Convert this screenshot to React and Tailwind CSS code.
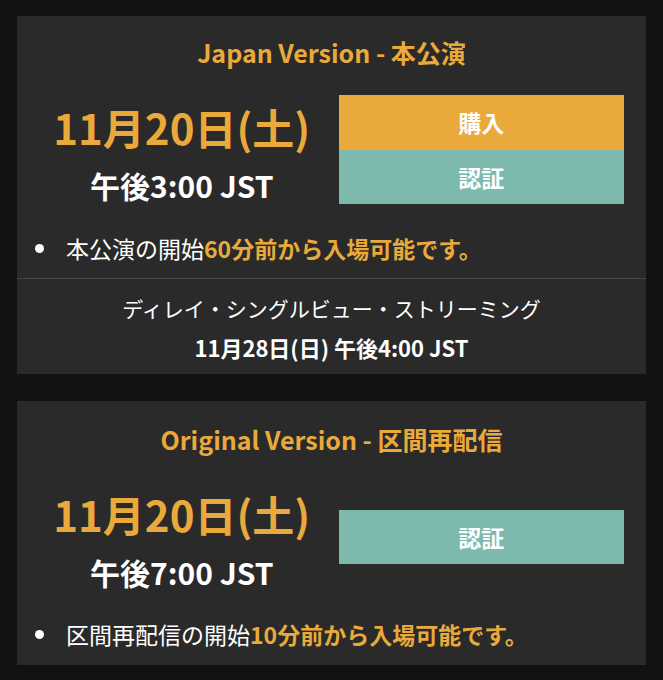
import React from 'react';

const font = { fontFamily: '"Noto Sans CJK JP", "Noto Sans", sans-serif' };

const Bullet = ({ lead, hl }) => (
  <div className="flex items-center pl-[18px] pr-[22px] text-[23px] leading-[32px]">
    <span className="w-[9px] h-[9px] rounded-full bg-white mr-[22px]"></span>
    <span className="text-white">{lead}</span>
    <span className="text-[#e9aa3b] font-bold">{hl}</span>
  </div>
);

const DateBlock = ({ time, className }) => (
  <div className={`flex flex-col items-center ${className}`}>
    <div className="text-[42px] leading-[50px] font-bold text-[#e9aa3b]">11月20日(土)</div>
    <div className="text-[30px] leading-[40px] font-bold text-white mt-[13px]">{time}</div>
  </div>
);

export default function App() {
  return (
    <div className="min-h-[680px] bg-[#121212] px-[17px] pt-[16px] pb-[15px] flex flex-col gap-[27px]" style={font}>
      <section className="bg-[#2a2a2a]">
        <h2 className="text-center text-[25px] leading-[34px] font-bold text-[#e9aa3b] pt-[19px]">
          Japan Version - 本公演
        </h2>
        <div className="grid grid-cols-2 gap-[14px] px-[22px] mt-[26px] items-start">
          <DateBlock time="午後3:00 JST" className="mt-[7px]" />
          <div className="flex flex-col">
            <button className="h-[55px] bg-[#e9aa3b] text-white font-bold text-[23px]">購入</button>
            <button className="h-[54px] bg-[#7eb9ae] text-white font-bold text-[23px]">認証</button>
          </div>
        </div>
        <div className="mt-[27px] pb-[14px]">
          <Bullet lead="本公演の開始" hl="60分前から入場可能です。" />
        </div>
        <div className="border-t border-[#454545] text-center text-white pt-[14px] pb-[12px]">
          <div className="text-[21px] leading-[30px]">ディレイ・シングルビュー・ストリーミング</div>
          <div className="text-[22px] leading-[30px] font-bold mt-[9px]">11月28日(日) 午後4:00 JST</div>
        </div>
      </section>

      <section className="bg-[#2a2a2a] pb-[15px]">
        <h2 className="text-center text-[25px] leading-[34px] font-bold text-[#e9aa3b] pt-[21px]">
          Original Version - 区間再配信
        </h2>
        <div className="grid grid-cols-2 gap-[14px] px-[22px] mt-[33px] items-start">
          <DateBlock time="午後7:00 JST" />
          <div className="flex flex-col mt-[21px]">
            <button className="h-[54px] bg-[#7eb9ae] text-white font-bold text-[23px]">認証</button>
          </div>
        </div>
        <div className="mt-[26px]">
          <Bullet lead="区間再配信の開始" hl="10分前から入場可能です。" />
        </div>
      </section>
    </div>
  );
}
